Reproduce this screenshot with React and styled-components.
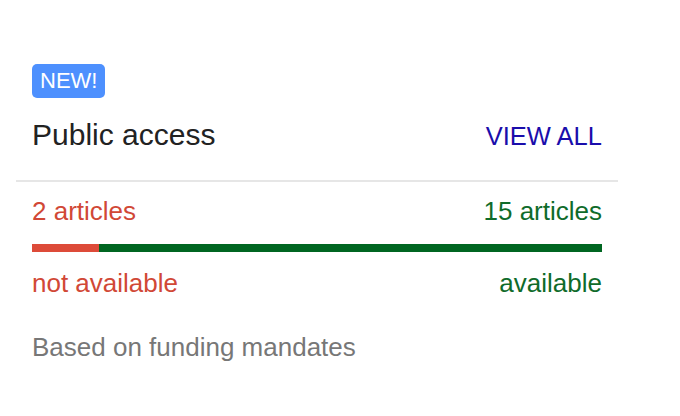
import React from 'react';
import styled, { createGlobalStyle } from 'styled-components';

const Global = createGlobalStyle`
  body {
    margin: 0;
    background: #fff;
    font-family: "Liberation Sans", Arial, Helvetica, sans-serif;
  }
`;

const Card = styled.section`
  width: 602px;
  margin: 64px 0 0 16px;
`;

const Header = styled.div`
  padding: 0 16px 26px;
`;

const Badge = styled.span`
  display: inline-block;
  height: 34px;
  line-height: 34px;
  padding: 0 8px;
  border-radius: 5px;
  background: #4d90fe;
  color: #fff;
  font-size: 22px;
`;

const TitleRow = styled.div`
  display: flex;
  justify-content: space-between;
  align-items: baseline;
  margin-top: 19px;
  line-height: 36px;
`;

const Title = styled.h2`
  margin: 0;
  font-size: 30px;
  font-weight: normal;
  color: #222;
`;

const ViewAll = styled.a`
  font-size: 25.5px;
  color: #1a0dab;
  text-decoration: none;
  cursor: pointer;
`;

const Divider = styled.hr`
  margin: 0;
  border: 0;
  border-top: 2px solid #e6e6e6;
`;

const Body = styled.div`
  padding: 14px 16px 0;
`;

const Row = styled.div`
  display: flex;
  justify-content: space-between;
  font-size: 26px;
  line-height: 30px;
`;

const Part = styled.span`
  color: ${p => (p.$ok ? '#0f6b2a' : '#d14836')};
`;

const Bar = styled.div`
  display: flex;
  height: 8px;
  margin: 18px 0 16px;
`;

const Segment = styled.div`
  background: ${p => (p.$ok ? '#006621' : '#dd4b39')};
`;

const Note = styled.p`
  margin: 34px 0 0;
  font-size: 26px;
  line-height: 30px;
  color: #777;
`;

const data = { missing: 2, available: 15 };

export default function App() {
  const total = data.missing + data.available;
  return (
    <>
      <Global />
      <Card>
        <Header>
          <Badge>NEW!</Badge>
          <TitleRow>
            <Title>Public access</Title>
            <ViewAll>VIEW ALL</ViewAll>
          </TitleRow>
        </Header>
        <Divider />
        <Body>
          <Row>
            <Part>{data.missing} articles</Part>
            <Part $ok>{data.available} articles</Part>
          </Row>
          <Bar>
            <Segment style={{ width: `${(data.missing / total) * 100}%` }} />
            <Segment $ok style={{ flex: 1 }} />
          </Bar>
          <Row>
            <Part>not available</Part>
            <Part $ok>available</Part>
          </Row>
          <Note>Based on funding mandates</Note>
        </Body>
      </Card>
    </>
  );
}
